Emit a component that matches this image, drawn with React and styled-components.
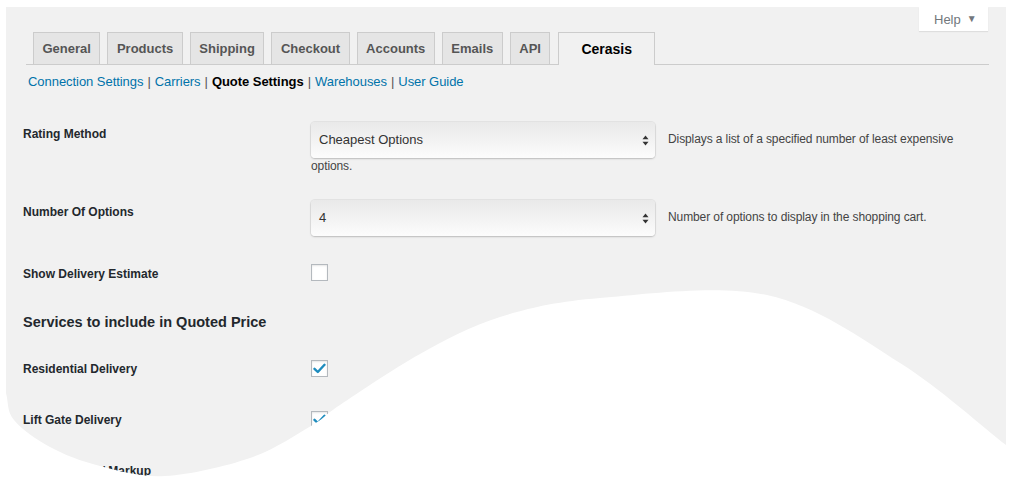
import React from "react";
import styled, { createGlobalStyle } from "styled-components";

const GlobalStyle = createGlobalStyle`
  html, body { margin: 0; padding: 0; background: #fff; }
  body { font-family: "Liberation Sans", Arial, Helvetica, sans-serif; }
  * { box-sizing: border-box; }
`;

const Stage = styled.div`
  position: relative;
  width: 1014px;
  height: 481px;
  overflow: hidden;
  padding: 7px 8px 0 6px;
  background: #fff;
`;

const Panel = styled.div`
  background: #f1f1f1;
  height: 100%;
  display: flex;
  flex-direction: column;
`;

const ScreenMeta = styled.div`
  display: flex;
  justify-content: flex-end;
  padding-right: 18px;
  height: 25px;
`;

const HelpTab = styled.div`
  width: 69px;
  height: 24px;
  background: #fff;
  box-shadow: 0 1px 1px rgba(0, 0, 0, 0.08);
  display: flex;
  align-items: center;
  padding-left: 15px;
  gap: 6px;
  font-size: 13px;
  color: #72777c;
`;

const Caret = styled.span`
  font-size: 10px;
  color: #72777c;
  margin-top: -1px;
`;

const TabsBar = styled.nav`
  display: flex;
  align-items: flex-end;
  margin: 0 17px 0 20px;
  padding-left: 7px;
  border-bottom: 1px solid #ccc;
  height: 33px;
`;

const Tab = styled.div`
  height: ${(p) => (p.$active ? "33px" : "32px")};
  margin-bottom: ${(p) => (p.$active ? "-1px" : "0")};
  margin-right: ${(p) => (p.$active ? "0" : "7px")};
  margin-left: ${(p) => (p.$active ? "1px" : "0")};
  padding: ${(p) => (p.$active ? "0 22px" : "0 8.5px")};
  border: 1px solid #ccc;
  border-bottom: none;
  background: ${(p) => (p.$active ? "#f1f1f1" : "#e5e5e5")};
  color: ${(p) => (p.$active ? "#000" : "#555")};
  font-size: ${(p) => (p.$active ? "14px" : "13px")};
  font-weight: bold;
  display: flex;
  align-items: center;
  padding-bottom: 1px;
`;

const SubNav = styled.div`
  margin: 9px 0 0 22px;
  font-size: 13px;
  line-height: 16px;
  letter-spacing: -0.05px;
  color: #000;
`;

const SubLink = styled.span`
  color: ${(p) => (p.$current ? "#000" : "#0073aa")};
  font-weight: ${(p) => (p.$current ? "bold" : "normal")};
`;

const Sep = styled.span`
  color: #555;
  margin: 0 4px;
`;

const Form = styled.div`
  padding: 0 30px 0 17px;
  display: flex;
  flex-direction: column;
`;

const Row = styled.div`
  display: grid;
  grid-template-columns: 288px 1fr;
  margin-top: ${(p) => p.$top}px;
`;

const Label = styled.div`
  font-size: 12px;
  font-weight: bold;
  color: #23282d;
  line-height: 16px;
  padding-top: ${(p) => p.$pad}px;
  white-space: nowrap;
`;

const Field = styled.div`
  font-size: 12px;
  line-height: 16px;
  color: #444;
  letter-spacing: -0.1px;
  padding-top: ${(p) => (p.$select ? 1 : 0)}px;
`;

const SelectBox = styled.div`
  display: inline-flex;
  vertical-align: middle;
  align-items: center;
  justify-content: space-between;
  width: 344px;
  height: 36px;
  margin-right: 13px;
  padding: 0 6px 0 8px;
  border-radius: 4px;
  background: linear-gradient(#e9e9e9, #fcfcfc);
  box-shadow: 0 0 0 1px rgba(0, 0, 0, 0.05), 0 1px 2px rgba(0, 0, 0, 0.18);
  font-size: 13px;
  letter-spacing: 0;
  color: #333;
`;

const Check = styled.div`
  width: 17px;
  height: 17px;
  background: #fff;
  border: 1px solid #b4b9be;
  box-shadow: inset 0 1px 2px rgba(0, 0, 0, 0.1);
  display: flex;
  align-items: center;
  justify-content: center;
`;

const Heading = styled.h2`
  margin: 0;
  margin-top: ${(p) => p.$top}px;
  font-size: 14.5px;
  line-height: 20px;
  font-weight: bold;
  color: #23282d;
`;

const WaveLayer = styled.svg`
  position: absolute;
  left: 0;
  top: 0;
  pointer-events: none;
`;

function Arrows() {
  return (
    <svg width="7" height="11" viewBox="0 0 7 11">
      <path d="M3.5 0.5 L6.5 4.3 L0.5 4.3 Z" fill="#333" />
      <path d="M3.5 10.5 L6.5 6.7 L0.5 6.7 Z" fill="#333" />
    </svg>
  );
}

function CheckMark() {
  return (
    <svg width="13" height="11" viewBox="0 0 13 11">
      <path d="M1.5 5.8 L4.8 9 L11.5 1.8" fill="none" stroke="#1e8cbe" strokeWidth="2.4" strokeLinecap="round" strokeLinejoin="round" />
    </svg>
  );
}

function smoothPath(pts) {
  let d = `M ${pts[0][0]} ${pts[0][1]}`;
  for (let i = 0; i < pts.length - 1; i++) {
    const p0 = pts[i - 1] || pts[i];
    const p1 = pts[i];
    const p2 = pts[i + 1];
    const p3 = pts[i + 2] || p2;
    const c1 = [p1[0] + (p2[0] - p0[0]) / 6, p1[1] + (p2[1] - p0[1]) / 6];
    const c2 = [p2[0] - (p3[0] - p1[0]) / 6, p2[1] - (p3[1] - p1[1]) / 6];
    d += ` C ${c1[0].toFixed(1)} ${c1[1].toFixed(1)}, ${c2[0].toFixed(1)} ${c2[1].toFixed(1)}, ${p2[0]} ${p2[1]}`;
  }
  return d;
}

const wavePoints = [
  [-2, 360], [6, 393], [14, 420], [50, 447], [100, 466], [165, 476], [250, 458],
  [311, 426], [340, 405], [420, 354], [500, 317], [600, 298], [767, 295], [900, 363],
  [1006, 445], [1030, 462],
];

const tabs = ["General", "Products", "Shipping", "Checkout", "Accounts", "Emails", "API"];

export default function App() {
  const wave = smoothPath(wavePoints) + " L 1030 490 L -10 490 L -10 360 Z";
  return (
    <>
      <GlobalStyle />
      <Stage>
        <Panel>
          <ScreenMeta>
            <HelpTab>
              Help <Caret>▼</Caret>
            </HelpTab>
          </ScreenMeta>
          <TabsBar>
            {tabs.map((t) => (
              <Tab key={t}>{t}</Tab>
            ))}
            <Tab $active>Cerasis</Tab>
          </TabsBar>
          <SubNav>
            <SubLink>Connection Settings</SubLink>
            <Sep>|</Sep>
            <SubLink>Carriers</SubLink>
            <Sep>|</Sep>
            <SubLink $current>Quote Settings</SubLink>
            <Sep>|</Sep>
            <SubLink>Warehouses</SubLink>
            <Sep>|</Sep>
            <SubLink>User Guide</SubLink>
          </SubNav>
          <Form>
            <Row $top={31}>
              <Label $pad={5}>Rating Method</Label>
              <Field $select>
                <SelectBox>
                  <span>Cheapest Options</span>
                  <Arrows />
                </SelectBox>
                Displays a list of a specified number of least expensive options.
              </Field>
            </Row>
            <Row $top={25}>
              <Label $pad={5}>Number Of Options</Label>
              <Field $select>
                <SelectBox>
                  <span>4</span>
                  <Arrows />
                </SelectBox>
                Number of options to display in the shopping cart.
              </Field>
            </Row>
            <Row $top={28}>
              <Label $pad={2}>Show Delivery Estimate</Label>
              <Field>
                <Check />
              </Field>
            </Row>
            <Heading $top={30}>Services to include in Quoted Price</Heading>
            <Row $top={28}>
              <Label $pad={1}>Residential Delivery</Label>
              <Field>
                <Check>
                  <CheckMark />
                </Check>
              </Field>
            </Row>
            <Row $top={34}>
              <Label $pad={1}>Lift Gate Delivery</Label>
              <Field>
                <Check>
                  <CheckMark />
                </Check>
              </Field>
            </Row>
            <Row $top={34}>
              <Label $pad={1}>Handling Fee / Markup</Label>
              <Field />
            </Row>
          </Form>
        </Panel>
        <WaveLayer width="1014" height="481" viewBox="0 0 1014 481">
          <path d={wave} fill="#fff" />
        </WaveLayer>
      </Stage>
    </>
  );
}
